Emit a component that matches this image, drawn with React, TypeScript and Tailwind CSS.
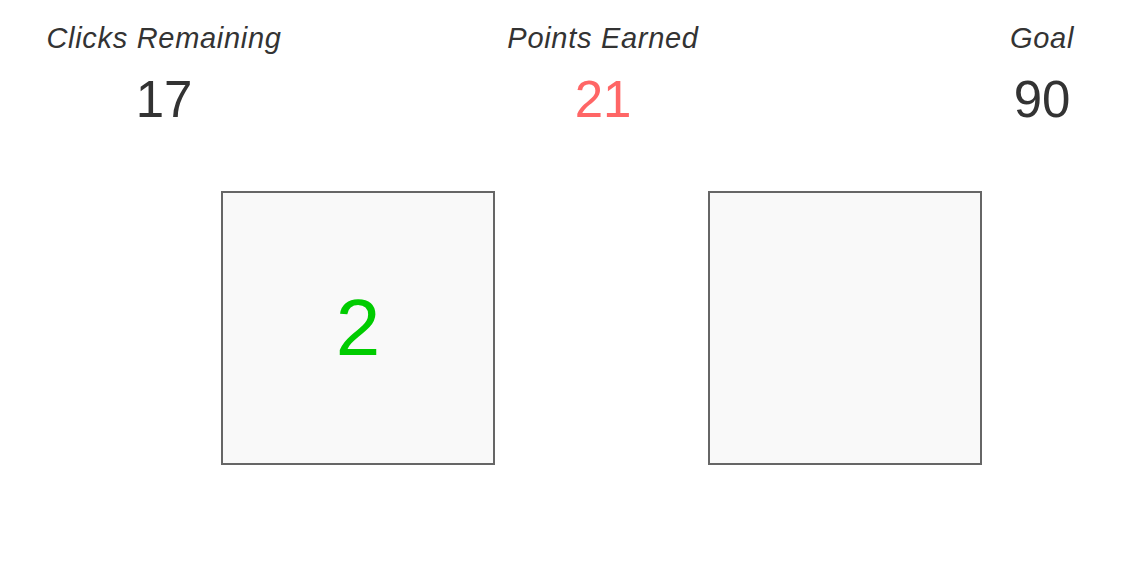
import React from 'react';

// ============================================
// Data
// ============================================

const stats: Array<{ label: string; value: number; color: string }> = [
  { label: 'Clicks Remaining', value: 17, color: 'text-[#333333]' },
  { label: 'Points Earned', value: 21, color: 'text-[#ff6666]' },
  { label: 'Goal', value: 90, color: 'text-[#333333]' },
];

// ============================================
// Components
// ============================================

function Stat({ label, value, color }: { label: string; value: number; color: string }) {
  return (
    <div className="w-[300px] shrink-0 flex flex-col items-center">
      <div className="text-[29px] leading-[32px] italic tracking-[0.7px] text-[#333333]">{label}</div>
      <div className={`mt-[17px] text-[51px] leading-[58px] ${color}`}>{value}</div>
    </div>
  );
}

function Tile({ value }: { value?: number }) {
  return (
    <div className="w-[274px] h-[274px] shrink-0 border-2 border-[#666666] bg-[#f9f9f9] flex items-center justify-center">
      {value !== undefined && (
        <span className="text-[80px] leading-none text-[#00cc00]">{value}</span>
      )}
    </div>
  );
}

export default function App() {
  return (
    <div
      className="w-[1146px] h-[570px] bg-white overflow-hidden"
      style={{ fontFamily: '"Liberation Sans", Arial, sans-serif' }}
    >
      {/* Score row */}
      <div className="flex pl-[14px] pt-[22px] gap-[139px]">
        {stats.map((s) => (
          <Stat key={s.label} {...s} />
        ))}
      </div>

      {/* Tiles */}
      <div className="flex pl-[221px] gap-[213px] mt-[62px]">
        <Tile value={2} />
        <Tile />
      </div>
    </div>
  );
}
